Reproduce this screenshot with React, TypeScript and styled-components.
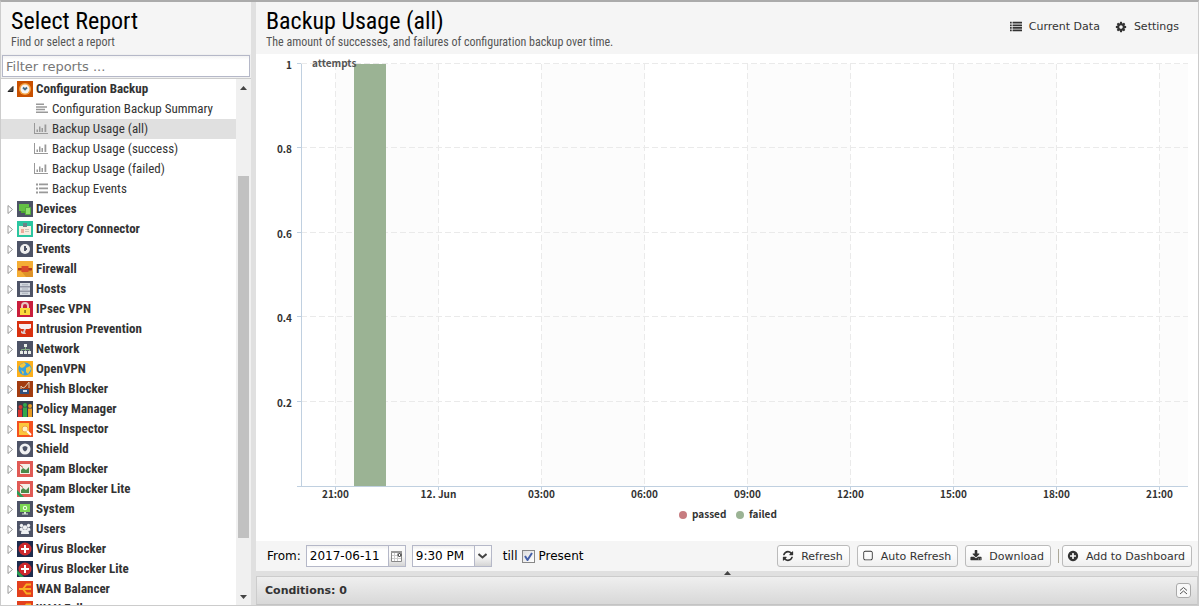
import React, { useLayoutEffect, useRef, useState } from 'react';
import styled, { createGlobalStyle } from 'styled-components';

const condensed = "'Roboto Condensed', Roboto, sans-serif";
const ui = "'DejaVu Sans', sans-serif";
const chartFont = "'Source Sans Pro', 'Noto Sans CJK SC', sans-serif";

const GlobalStyle = createGlobalStyle`
  * { box-sizing: border-box; }
  body { margin: 0; background: #fff; font-family: ${ui}; color: #000; }
  button, input, select { font: inherit; color: inherit; }
  button { padding: 0; margin: 0; border: 0; background: none; cursor: pointer; }
  svg { display: block; flex: none; }
`;

const Shell = styled.div`
  display: flex;
  height: 100vh;
  border: 1px solid #ccc;
  border-top: 2px solid #ababab;
  background: #e0e0e0;
  overflow: hidden;
`;

const Sidebar = styled.aside`
  display: flex;
  flex-direction: column;
  flex: 0 0 250px;
  background: #fff;
`;

const Splitter = styled.div`
  flex: 0 0 5px;
`;

const Main = styled.main`
  display: flex;
  flex-direction: column;
  flex: 1;
  min-width: 0;
`;

const PanelHeader = styled.header`
  display: flex;
  justify-content: space-between;
  align-items: flex-start;
  height: 52px;
  flex: none;
  padding: 5px 10px 0;
  background: #f5f5f5;
`;

const Title = styled.h1`
  margin: 0;
  font: 400 24px/28px ${condensed};
`;

const Subtitle = styled.p`
  margin: 0;
  font: 400 12px/14px ${condensed};
  color: #555;
`;

const HeaderActions = styled.div`
  display: flex;
  gap: 15px;
  padding: 12px 9px 0 0;
`;

const LinkButton = styled.button`
  display: flex;
  align-items: center;
  gap: 7px;
  font-size: 11px;
  line-height: 16px;
  color: #333;
`;

const FilterBar = styled.div`
  flex: none;
  padding: 1px;
  border-bottom: 1px solid #ccc;
  background: #f0f0f0;
`;

const FilterInput = styled.input`
  display: block;
  width: 100%;
  height: 22px;
  padding: 0 3px;
  border: 1px solid #b5b8c8;
  background: linear-gradient(#f3f3f3, #fff 4px);
  font-size: 13px;
  &::placeholder { color: #777; opacity: 1; }
`;

const TreeArea = styled.div`
  display: flex;
  flex: 1;
  min-height: 0;
`;

const Tree = styled.ul`
  flex: 1;
  margin: 0;
  padding: 0;
  list-style: none;
  overflow: hidden;
`;

const SubTree = styled.ul`
  margin: 0;
  padding: 0;
  list-style: none;
`;

const Row = styled.button<{ $leaf?: boolean; $selected?: boolean }>`
  display: flex;
  align-items: center;
  gap: ${p => (p.$leaf ? 4 : 3)}px;
  width: 100%;
  height: 20px;
  padding-left: ${p => (p.$leaf ? 33 : 4)}px;
  background: ${p => (p.$selected ? '#e0e0e0' : 'transparent')};
  font: ${p => (p.$leaf ? 400 : 700)} 13px/20px ${condensed};
  color: #333;
  white-space: nowrap;
`;

const RowIcons = styled.span`
  display: flex;
  align-items: center;
  gap: 2px;
`;

const Scrollbar = styled.div`
  display: flex;
  flex-direction: column;
  align-items: center;
  flex: 0 0 15px;
  background: #f0f0f0;
`;

const ScrollButton = styled.button`
  display: grid;
  place-items: center;
  width: 15px;
  height: 17px;
`;

const Gap = styled.div<{ $grow: number }>`
  flex: ${p => p.$grow} 1 0;
`;

const Thumb = styled.div`
  flex: 362 1 0;
  width: 11px;
  background: #c1c1c1;
`;

const ChartBox = styled.div`
  flex: 1;
  min-height: 0;
  background: #fff;
  overflow: hidden;
  text { font: 600 10px ${chartFont}; fill: #333; }
`;

const Toolbar = styled.form`
  display: flex;
  align-items: center;
  flex: none;
  height: 30px;
  padding: 0 6px 0 11px;
  background: #f5f5f5;
  font-size: 12px;
`;

const FieldLabel = styled.label`
  margin-right: 5px;
`;

const DateField = styled.div`
  display: flex;
  width: 100px;
  height: 22px;
  margin-right: 6px;
  border: 1px solid #b5b8c8;
  background: #fff;
`;

const DateInput = styled.input`
  flex: 1;
  min-width: 0;
  padding: 0 3px;
  border: 0;
  background: linear-gradient(#f0f0f0, #fff 4px);
  font-size: 12px;
`;

const Trigger = styled.button`
  display: grid;
  place-items: center;
  width: 17px;
  border-left: 1px solid #b5b8c8;
  background: linear-gradient(#fafafa 50%, #d4d4d4);
`;

const TimeField = styled.div`
  display: grid;
  width: 80px;
  height: 22px;
  margin-right: 11px;
  border: 1px solid #b5b8c8;
  background: #fff;
  > * { grid-area: 1 / 1; }
`;

const TimeSelect = styled.select`
  appearance: none;
  width: 100%;
  padding: 0 20px 0 3px;
  border: 0;
  border-radius: 0;
  background: linear-gradient(#f0f0f0, #fff 4px);
  font-size: 12px;
`;

const TimeArrow = styled.span`
  display: grid;
  place-items: center;
  justify-self: end;
  width: 17px;
  border-left: 1px solid #b5b8c8;
  background: linear-gradient(#fafafa 50%, #d4d4d4);
  pointer-events: none;
`;

const CheckLabel = styled.label`
  display: flex;
  align-items: center;
  gap: 4px;
`;

const CheckWrap = styled.span`
  display: grid;
  place-items: center;
  > * { grid-area: 1 / 1; }
  svg { pointer-events: none; visibility: hidden; }
  input:checked + svg { visibility: visible; }
`;

const CheckInput = styled.input`
  appearance: none;
  width: 13px;
  height: 13px;
  margin: 0;
  border: 1px solid #888;
  background: linear-gradient(135deg, #ddd, #fff);
`;

const Actions = styled.div`
  display: flex;
  align-items: center;
  gap: 7px;
  margin-left: auto;
`;

const ActionButton = styled.button`
  display: flex;
  align-items: center;
  gap: 7px;
  height: 22px;
  padding: 0 6px 0 4px;
  border: 1px solid #bbb;
  border-radius: 3px;
  background: linear-gradient(#fff, #fafafa 50%, #efefef);
  font-size: 11px;
  color: #333;
  white-space: nowrap;
`;

const LastGroup = styled.div`
  display: flex;
  align-items: center;
  gap: 3px;
`;

const Separator = styled.span`
  width: 1px;
  height: 14px;
  background: #aca899;
`;

const CollapseBar = styled.div`
  display: flex;
  justify-content: center;
  flex: none;
  height: 5px;
`;

const Conditions = styled.section`
  display: flex;
  align-items: center;
  justify-content: space-between;
  flex: none;
  height: 29px;
  padding: 0 6px 0 8px;
  border: 1px solid #ccc;
  border-bottom-color: #c4c4c4;
  background: linear-gradient(#efefef, #d8d8d8);
`;

const ConditionsTitle = styled.h2`
  margin: 0;
  font: 700 11px/16px ${ui};
  color: #333;
`;

const ToolButton = styled.button`
  display: grid;
  place-items: center;
  width: 15px;
  height: 15px;
  border: 1px solid #aaa;
  border-radius: 3px;
  background: #f8f8f8;
`;

const glyphs = {
  list: 'M256 1312v192q0 13-9 22t-23 10H32q-13 0-22-10t-10-22v-192q0-13 10-22t22-10h192q13 0 23 10t9 22zm0-384v192q0 32-32 32H32q-32 0-32-32V928q0-32 32-32h192q32 0 32 32zm0-384v192q0 32-32 32H32q-32 0-32-32V544q0-32 32-32h192q32 0 32 32zm1536 768v192q0 32-32 32H416q-32 0-32-32v-192q0-32 32-32h1344q32 0 32 32zM256 160v192q0 32-32 32H32q-32 0-32-32V160q0-32 32-32h192q32 0 32 32zm1536 768v192q0 32-32 32H416q-32 0-32-32V928q0-32 32-32h1344q32 0 32 32zm0-384v192q0 32-32 32H416q-32 0-32-32V544q0-32 32-32h1344q32 0 32 32zm0-384v192q0 32-32 32H416q-32 0-32-32V160q0-32 32-32h1344q32 0 32 32z',
  cog: 'M1152 896q0-106-75-181t-181-75-181 75-75 181 75 181 181 75 181-75 75-181zm512-109v222q0 12-8 23t-20 13l-185 28q-19 54-39 91 35 50 107 138 10 12 10 25t-9 23q-27 37-99 108t-94 71q-12 0-26-9l-138-108q-44 23-91 38-16 136-29 186-7 28-36 28h-222q-14 0-24.500-8.500t-11.500-21.500l-28-184q-49-16-90-37l-141 107q-10 9-25 9-14 0-25-11-126-114-165-168-7-10-7-23 0-12 8-23 15-21 51-66.500t54-70.500q-27-50-41-99l-183-27q-13-2-21-12.500t-8-23.500v-222q0-12 8-23t19-13l186-28q14-46 39-92-40-57-107-138-10-12-10-24 0-10 9-23 26-36 98.500-107.500t94.500-71.500q13 0 26 10l138 107q44-23 91-38 16-136 29-186 7-28 36-28h222q14 0 24.500 8.500t11.500 21.500l28 184q49 16 90 37l142-107q9-9 24-9 13 0 25 10 129 119 165 170 7 8 7 22 0 12-8 23-15 21-51 66.500t-54 70.500q26 50 41 98l183 28q13 2 21 12.500t8 23.500z',
  refresh: 'M1639 1056q0 5-1 7-64 268-268 434.500t-478 166.500q-146 0-282.500-55t-243.500-157l-129 129q-19 19-45 19t-45-19-19-45v-448q0-26 19-45t45-19h448q26 0 45 19t19 45-19 45l-137 137q71 66 161 102t187 36q134 0 250-65t186-179q11-17 53-117 8-23 30-23h192q13 0 22.500 9.500t9.500 22.500zm25-800v448q0 26-19 45t-45 19h-448q-26 0-45-19t-19-45 19-45l138-138q-148-137-349-137-134 0-250 65t-186 179q-11 17-53 117-8 23-30 23h-199q-13 0-22.500-9.500t-9.500-22.500v-7q65-268 270-434.500t480-166.500q146 0 284 55.500t245 156.500l130-129q19-19 45-19t45 19 19 45z',
  download: 'M1344 1344q0-26-19-45t-45-19-45 19-19 45 19 45 45 19 45-19 19-45zm256 0q0-26-19-45t-45-19-45 19-19 45 19 45 45 19 45-19 19-45zm128-224v320q0 40-28 68t-68 28h-1472q-40 0-68-28t-28-68v-320q0-40 28-68t68-28h465l135 136q58 56 136 56t136-56l136-136h464q40 0 68 28t28 68zm-325-569q17 41-14 70l-448 448q-18 19-45 19t-45-19l-448-448q-31-29-14-70 17-39 59-39h256v-448q0-26 19-45t45-19h256q26 0 45 19t19 45v448h256q42 0 59 39z',
  plus: 'M1344 960v-128q0-26-19-45t-45-19h-256v-256q0-26-19-45t-45-19h-128q-26 0-45 19t-19 45v256h-256q-26 0-45 19t-19 45v128q0 26 19 45t45 19h256v256q0 26 19 45t45 19h128q26 0 45-19t19-45v-256h256q26 0 45-19t19-45zm320-64q0 209-103 385.500t-279.500 279.500-385.500 103-385.500-103-279.500-279.500-103-385.500 103-385.500 279.500-279.500 385.500-103 385.500 103 279.500 279.500 103 385.500z',
  square: 'M1312 256h-832q-66 0-113 47t-47 113v832q0 66 47 113t113 47h832q66 0 113-47t47-113v-832q0-66-47-113t-113-47zm288 160v832q0 119-84.500 203.500t-203.500 84.500h-832q-119 0-203.500-84.500t-84.500-203.500v-832q0-119 84.500-203.500t203.500-84.500h832q119 0 203.500 84.500t84.500 203.500z',
};

function Glyph({ name, size = 14 }: { name: keyof typeof glyphs; size?: number }) {
  return (
    <svg width={size} height={size} viewBox="0 0 1792 1792" aria-hidden="true">
      <path fill="#333" d={glyphs[name]} />
    </svg>
  );
}

function Expander({ open }: { open?: boolean }) {
  return (
    <svg width="10" height="16" viewBox="0 0 10 16" aria-hidden="true">
      {open ? (
        <path d="M8 5.500V10.500H3Z" fill="#555" stroke="#222" />
      ) : (
        <path d="M3 4.500L7.500 8.500L3 12.500Z" fill="#fff" stroke="#999" />
      )}
    </svg>
  );
}

function LeafIcon({ kind }: { kind: string }) {
  return (
    <svg width="14" height="14" viewBox="0 0 14 14" fill="#999" aria-hidden="true">
      {kind === 'text' && <path d="M2 1.500h8v1.500H2zM2 4.200h11v1.500H2zM2 6.800h9v1.500H2zM2 9.500h12v1.500H2z" />}
      {kind === 'chart' && <path d="M0 1h1v10h13v1H0zM2.500 7.500h1.500v2.500H2.500zM5 4.500h1.500v5.500H5zM7.500 6h1.500v4H7.500zM10.500 2.500h1.800v7.500h-1.800z" />}
      {kind === 'list' && <path d="M2 1.500h2v2H2zM5 1.500h9v1.800H5zM2 5.500h2v2H2zM5 5.500h9v1.800H5zM2 9.500h2v2H2zM5 9.500h9v1.800H5z" />}
    </svg>
  );
}

const slate = '#4d5366';

const appArt: Record<string, [string, React.ReactNode]> = {
  backup: ['#c85000', <><circle cx="8" cy="8" r="6" fill="#f5a040" /><circle cx="8" cy="8" r="4.500" fill="#f4f4f4" /><path d="M6 6.500L8 8.500L10 6.500" fill="none" stroke="#456b86" strokeWidth="1.800" /></>],
  devices: [slate, <><path d="M2 3h10v7H2z" fill="#63c044" /><path d="M4 10h5v2H4z" fill="#4aa532" /><path d="M8.500 6.500h5v7h-5z" fill="#8fe06b" stroke="#55ad3c" /></>],
  directory: ['#2bc5a0', <><path d="M2 5h12v9H2z" fill="#f7ede0" /><path d="M6 2h4v4H6z" fill="#6f8287" /><path d="M4 8h3v4H4z" fill="#ecab9c" /><path d="M8 8h4v1H8zM8 10h4v1H8z" fill="#c9c9ba" /></>],
  events: [slate, <><circle cx="8" cy="8" r="5" fill="#eee" /><path d="M8 5v5M8 8h2" fill="none" stroke={slate} strokeWidth="2" /></>],
  firewall: ['#f4ad35', <><path d="M4 10L12 7l4 4v5H9z" fill="#dd9227" /><path d="M1 7h14v2.500H1z" fill="#b23a1c" /><path d="M4.500 5h7v6h-7z" fill="#d8482a" /></>],
  hosts: [slate, <><path d="M3 2h10v3.500H3zM3 6.200h10v3.500H3zM3 10.500h10V14H3z" fill="#d3d8df" /><path d="M5 3.200h6v1H5zM5 7.500h6v1H5zM5 11.700h6v1H5z" fill="#aab1bb" /></>],
  ipsec: ['#c91f3c', <><path d="M5 8V5a3 3 0 0 1 6 0v3" fill="none" stroke="#e8c7c0" strokeWidth="2" /><path d="M3 7h10v7H3z" fill="#fbdc3b" /><path d="M7.300 9h1.500v3H7.300z" fill="#80650f" /></>],
  intrusion: ['#d8300f', <><path d="M2 3h12v4l-2 1H4L2 6z" fill="#f6eeee" /><path d="M7 8h2l-1 3 1 2H6l-2-1V9.500L6 11z" fill="#dccaca" /></>],
  network: [slate, <><path d="M7 3h3v3H7zM3 10h3v3H3zM7 10h3v3H7zM11 10h3v3h-3z" fill="#e8ece8" /><path d="M4.500 10V8.500h8V10M8.500 6v4" fill="none" stroke="#84ac82" /></>],
  openvpn: ['#fcb01c', <><circle cx="8" cy="8" r="6.500" fill="#3aa0dc" /><path d="M3 4l4-2.500 2 2L7 6 5 7 3 6zM9 7l4-2 1 3-3 5-2-2zM4 9l3 2-1 3z" fill="#f3c73e" /></>],
  phish: ['#a23c10', <><path d="M3 8h9v5H3z" fill="#30507c" /><path d="M4 8V5l2 2 2-1 4-5v6" fill="none" stroke="#dcc9b0" /><path d="M6 9h4v2H6z" fill="#dce6ef" /></>],
  policy: ['#3a3f4c', <><g fill="#d8352f"><circle cx="3.500" cy="6" r="2" /><path d="M1 8.500h4V16H1z" /></g><g fill="#32a84a"><circle cx="8" cy="4" r="2" /><path d="M6 6.500h4V16H6z" /></g><g fill="#e99b22"><circle cx="13" cy="5" r="2" /><path d="M11 7.500h4V16h-4z" /></g></>],
  ssl: ['#f4511f', <><path d="M2 2h10v12H2z" fill="#fbc63c" /><circle cx="8" cy="8" r="3" fill="#fff0c2" stroke="#f0a344" /><path d="M10 10l4 4" stroke="#fff" strokeWidth="2" /></>],
  shield: [slate, <><circle cx="8" cy="8" r="5.500" fill="#f1f1f1" /><path d="M5.500 6L8 5l2.500 1q0 3.500-2.500 4.500Q5.500 9.500 5.500 6z" fill={slate} /></>],
  spam: ['#e05a55', <><path d="M3 3h10v10H3z" fill="#f4efe8" /><path d="M4 12V9l2-2 3 2 3-3v6z" fill="#4a8a4a" /><path d="M3 4l3 2.500" stroke="#c9453c" /></>],
  system: [slate, <><path d="M3 3h10v8H3z" fill="#7ad552" /><path d="M7 11h2v2H7zM5 12.500h6v1H5z" fill="#d9e5d6" /><circle cx="8" cy="7" r="2.200" fill="#e9ffe2" /><circle cx="8" cy="7" r="1" fill="#5cb63c" /></>],
  users: [slate, <g fill="#eef0f2"><circle cx="4.500" cy="4.500" r="1.700" /><circle cx="11.500" cy="4.500" r="1.700" /><circle cx="8" cy="6.500" r="2.200" /><path d="M2.500 9.500q0-3 2-3l1 0 0.500 2-1.500 1.500zM13.500 9.500q0-3-2-3l-1 0-0.500 2 1.500 1.500zM4 13q0-4 2.500-4.500h3Q12 9 12 13z" /></g>],
  virus: ['#1d2b4d', <><circle cx="8" cy="8" r="6.500" fill="#cf2a2e" /><path d="M7 4h2v3h3v2H9v3H7V9H4V7h3z" fill="#fff" /></>],
  wan: ['#e3401d', <><path d="M14 3.500H9.500L6 8l3.500 4.500H14M2 8h12" fill="none" stroke="#f9ae23" strokeWidth="1.800" /></>],
};

function AppIcon({ name, lite }: { name: string; lite?: boolean }) {
  const [bg, art] = appArt[name];
  return (
    <svg width="16" height="16" viewBox="0 0 16 16" aria-hidden="true">
      <rect width="16" height="16" fill={bg} />
      {art}
      {lite && <path d="M0 9l7 7H3L0 13z" fill="#2b9d55" />}
    </svg>
  );
}

function Arrow({ down }: { down?: boolean }) {
  return (
    <svg width="7" height="4" viewBox="0 0 7 4" aria-hidden="true">
      <path d={down ? 'M0 0h7L3.500 4z' : 'M0 4h7L3.500 0z'} fill="#444" />
    </svg>
  );
}

const reports: [string, string][] = [
  ['Configuration Backup Summary', 'text'],
  ['Backup Usage (all)', 'chart'],
  ['Backup Usage (success)', 'chart'],
  ['Backup Usage (failed)', 'chart'],
  ['Backup Events', 'list'],
];

const categories: [string, string, boolean?][] = [
  ['Devices', 'devices'],
  ['Directory Connector', 'directory'],
  ['Events', 'events'],
  ['Firewall', 'firewall'],
  ['Hosts', 'hosts'],
  ['IPsec VPN', 'ipsec'],
  ['Intrusion Prevention', 'intrusion'],
  ['Network', 'network'],
  ['OpenVPN', 'openvpn'],
  ['Phish Blocker', 'phish'],
  ['Policy Manager', 'policy'],
  ['SSL Inspector', 'ssl'],
  ['Shield', 'shield'],
  ['Spam Blocker', 'spam'],
  ['Spam Blocker Lite', 'spam', true],
  ['System', 'system'],
  ['Users', 'users'],
  ['Virus Blocker', 'virus'],
  ['Virus Blocker Lite', 'virus', true],
  ['WAN Balancer', 'wan'],
  ['WAN Failover', 'wan'],
];

const hours = ['21:00', '12. Jun', '03:00', '06:00', '09:00', '12:00', '15:00', '18:00', '21:00'];
const levels = ['1', '0.8', '0.6', '0.4', '0.2'];

function UsageChart() {
  const box = useRef<HTMLDivElement>(null);
  const [size, setSize] = useState({ w: 942, h: 487 });

  useLayoutEffect(() => {
    const el = box.current;
    if (!el) return;
    const measure = () => setSize({ w: el.clientWidth, h: el.clientHeight });
    measure();
    const observer = new ResizeObserver(measure);
    observer.observe(el);
    return () => observer.disconnect();
  }, []);

  const left = 45;
  const right = size.w - 10;
  const top = 10;
  const bottom = size.h - 55;
  const span = right - left;
  // The time axis covers 25h 52m, starting one hour before 21:00.
  const tickX = (i: number) => Math.round(left + span * (0.0388 + i * 0.116)) + 0.5;
  const levelY = (i: number) => Math.round(top + ((bottom - top) * i) / 5) - 0.5;
  const center = size.w / 2;

  return (
    <ChartBox ref={box}>
      <svg width={size.w} height={size.h} role="img" aria-label="Backup attempts over time">
        {hours.map((_, i) =>
          i % 2 === 0 ? (
            <rect
              key={i}
              x={tickX(i)}
              y={top}
              width={Math.max(0, (i === 8 ? right : tickX(i + 1)) - tickX(i))}
              height={Math.max(0, bottom - top)}
              fill="#fcfcfc"
            />
          ) : null,
        )}
        {levels.map((label, i) => (
          <g key={label}>
            <path d={`M${left} ${levelY(i)}H${right}`} stroke="#eaeaea" strokeDasharray="6 3" />
            <path d={`M${left - 4} ${levelY(i)}H${left}`} stroke="#c0d0e0" />
            <text x={left - 9} y={levelY(i) + 5} textAnchor="end">{label}</text>
          </g>
        ))}
        {hours.map((label, i) => (
          <g key={i}>
            <path d={`M${tickX(i)} ${top}V${bottom}`} stroke="#eaeaea" strokeDasharray="6 3" />
            <path d={`M${tickX(i)} ${bottom}v4`} stroke="#c0d0e0" />
            <text x={tickX(i)} y={bottom + 12} textAnchor="middle">{label}</text>
          </g>
        ))}
        <rect x={Math.round(left + span * 0.06)} y={top} width={Math.round(span * 0.036)} height={Math.max(0, bottom - top)} fill="#9bb394" />
        <path d={`M${left + 0.5} ${top}V${bottom}M${left - 4} ${bottom + 0.5}H${right}`} stroke="#c0d0e0" />
        <text x={left + 11} y="13" style={{ fill: '#555' }}>attempts</text>
        <circle cx={center - 44} cy={bottom + 29} r="4" fill="#c77c80" />
        <text x={center - 35} y={bottom + 32}>passed</text>
        <circle cx={center + 13} cy={bottom + 29} r="4" fill="#9bb394" />
        <text x={center + 22} y={bottom + 32}>failed</text>
      </svg>
    </ChartBox>
  );
}

export default function App() {
  return (
    <>
      <GlobalStyle />
      <Shell>
        <Sidebar>
          <PanelHeader>
            <div>
              <Title as="h2">Select Report</Title>
              <Subtitle>Find or select a report</Subtitle>
            </div>
          </PanelHeader>
          <FilterBar>
            <FilterInput type="text" aria-label="Filter reports" placeholder="Filter reports ..." />
          </FilterBar>
          <TreeArea>
            <Tree>
              <li>
                <Row type="button" aria-expanded="true">
                  <RowIcons><Expander open /><AppIcon name="backup" /></RowIcons>
                  Configuration Backup
                </Row>
                <SubTree>
                  {reports.map(([label, kind]) => (
                    <li key={label}>
                      <Row type="button" $leaf $selected={label === 'Backup Usage (all)'}>
                        <LeafIcon kind={kind} />
                        {label}
                      </Row>
                    </li>
                  ))}
                </SubTree>
              </li>
              {categories.map(([label, icon, lite]) => (
                <li key={label}>
                  <Row type="button" aria-expanded="false">
                    <RowIcons><Expander /><AppIcon name={icon} lite={lite} /></RowIcons>
                    {label}
                  </Row>
                </li>
              ))}
            </Tree>
            <Scrollbar>
              <ScrollButton type="button" aria-label="Scroll up"><Arrow /></ScrollButton>
              <Gap $grow={80} />
              <Thumb />
              <Gap $grow={50} />
              <ScrollButton type="button" aria-label="Scroll down"><Arrow down /></ScrollButton>
            </Scrollbar>
          </TreeArea>
        </Sidebar>
        <Splitter />
        <Main>
          <PanelHeader>
            <div>
              <Title>Backup Usage (all)</Title>
              <Subtitle>The amount of successes, and failures of configuration backup over time.</Subtitle>
            </div>
            <HeaderActions>
              <LinkButton type="button"><Glyph name="list" size={12} />Current Data</LinkButton>
              <LinkButton type="button"><Glyph name="cog" size={12} />Settings</LinkButton>
            </HeaderActions>
          </PanelHeader>
          <UsageChart />
          <Toolbar onSubmit={e => e.preventDefault()}>
            <FieldLabel htmlFor="from-date">From:</FieldLabel>
            <DateField>
              <DateInput id="from-date" type="text" defaultValue="2017-06-11" />
              <Trigger type="button" aria-label="Pick a date">
                <svg width="13" height="13" viewBox="0 0 13 13" aria-hidden="true">
                  <path d="M1.500 1.500h10v10h-10z" fill="#fff" stroke="#888" />
                  <path d="M1 1h11v2H1z" fill="#999" />
                  <path d="M4.500 3v8M7.500 3v8M2 5.500h9M2 8.500h9" stroke="#ccc" />
                  <circle cx="9.500" cy="5" r="1.500" fill="#fff" stroke="#222" />
                </svg>
              </Trigger>
            </DateField>
            <TimeField>
              <TimeSelect aria-label="From time" defaultValue="9:30 PM">
                <option>9:30 PM</option>
              </TimeSelect>
              <TimeArrow>
                <svg width="9" height="6" viewBox="0 0 9 6" aria-hidden="true">
                  <path d="M0.500 1l4 3.500L8.500 1" fill="none" stroke="#444" strokeWidth="2" />
                </svg>
              </TimeArrow>
            </TimeField>
            <CheckLabel>
              till
              <CheckWrap>
                <CheckInput type="checkbox" defaultChecked />
                <svg width="9" height="9" viewBox="0 0 9 9" aria-hidden="true">
                  <path d="M1 4l2.500 4L8 1" fill="none" stroke="#4560a8" strokeWidth="2" />
                </svg>
              </CheckWrap>
              Present
            </CheckLabel>
            <Actions>
              <ActionButton type="button"><Glyph name="refresh" size={12} />Refresh</ActionButton>
              <ActionButton type="button" aria-pressed="false"><Glyph name="square" size={12} />Auto Refresh</ActionButton>
              <ActionButton type="button"><Glyph name="download" size={12} />Download</ActionButton>
              <LastGroup>
                <Separator />
                <ActionButton type="button"><Glyph name="plus" size={12} />Add to Dashboard</ActionButton>
              </LastGroup>
            </Actions>
          </Toolbar>
          <CollapseBar><Arrow /></CollapseBar>
          <Conditions>
            <ConditionsTitle>Conditions: 0</ConditionsTitle>
            <ToolButton type="button" aria-label="Expand conditions">
              <svg width="9" height="9" viewBox="0 0 9 9" aria-hidden="true">
                <path d="M1 4.500l3.500-3 3.500 3M1 8l3.500-3L8 8" fill="none" stroke="#555" />
              </svg>
            </ToolButton>
          </Conditions>
        </Main>
      </Shell>
    </>
  );
}
